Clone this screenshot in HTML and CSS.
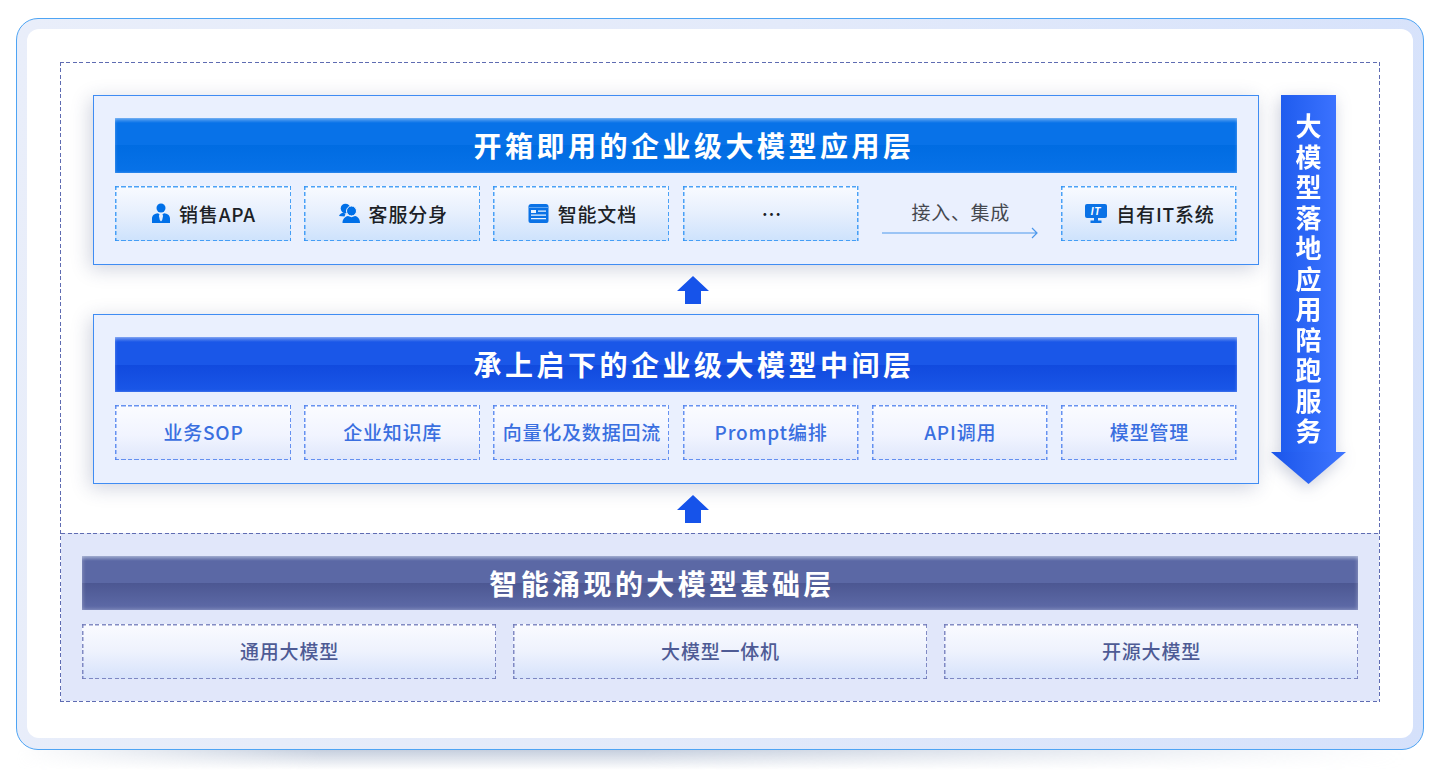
FILE: index.html
```html
<!DOCTYPE html>
<html lang="zh-CN">
<head>
<meta charset="utf-8">
<title>企业级大模型架构</title>
<link rel="stylesheet" href="styles.css">
</head>
<body>
<div class="page">
  <div class="shell">
    <div class="inner">
      <div class="frame">
        <div class="upper">
          <div class="layers">
            <section class="panel">
              <h2 class="title title-app">开箱即用的企业级大模型应用层</h2>
              <div class="grid6">
                <div class="item item-app">
                  <svg class="ico" width="18" height="20" viewBox="0 0 18 20"><circle cx="9" cy="5" r="4.5" fill="#0070e8"/><path d="M0 20v-4.500C0 12.500 2.500 10.600 6 10.300l1.600 1.200-.7 1.200.9 4.300L9 18.500l1.200-1.500.9-4.300-.7-1.200 1.600-1.200c3.500.3 6 2.200 6 5.200V20z" fill="#0070e8"/></svg>
                  <span>销售APA</span>
                </div>
                <div class="item item-app">
                  <svg class="ico" width="21" height="20" viewBox="0 0 21 20"><circle cx="6.500" cy="5.500" r="4.800" fill="#0070e8"/><path d="M0 13c.6-2 2.400-3 4.500-3.200l2 1-1 2.700z" fill="#0070e8"/><circle cx="12.500" cy="8" r="5" fill="#0070e8" stroke="#f0f5fe" stroke-width="1"/><path d="M3.500 20c0-4 2.500-6.500 5.500-7l3.500 1.200 3.500-1.200c3 .5 5 3 5 7z" fill="#0070e8"/></svg>
                  <span>客服分身</span>
                </div>
                <div class="item item-app">
                  <svg class="ico" width="21" height="19" viewBox="0 0 21 19"><path d="M3 0h15c1.500 0 2.500 1 2.500 2.500V17a2 2 0 0 1-2 2h-16a2 2 0 0 1-2-2V2.500C.5 1 1.500 0 3 0z" fill="#0a72e6"/><path d="M.5 3.500h20" stroke="#5ea4f0" stroke-width="1"/><path d="M3 6h5v3H3zM10 6.500h8v1.300h-8zM3 10.500h15v1.300H3zM3 14h15v1.300H3z" fill="#eaf3fe"/></svg>
                  <span>智能文档</span>
                </div>
                <div class="item item-app dots">…</div>
                <div class="link">
                  <span class="link-text">接入、集成</span>
                  <svg class="link-arrow" width="157" height="12" viewBox="0 0 157 12"><path d="M0 6h155M150 1l5 5-5 5" fill="none" stroke="#4c98ec" stroke-width="1.200"/></svg>
                </div>
                <div class="item item-app">
                  <svg class="ico" width="22" height="19" viewBox="0 0 22 19"><rect x="0" y="0" width="22" height="14" rx="2" fill="#0a72e6"/><text x="11" y="11" class="ico-text" text-anchor="middle">IT</text><path d="M9 14h4v2.500H9zM5.500 16.500h11V19h-11z" fill="#0a72e6"/></svg>
                  <span>自有IT系统</span>
                </div>
              </div>
            </section>
            <div class="connector">
              <svg width="32" height="28" viewBox="0 0 32 28"><path d="M16 0l16 15h-8v13H8V15H0z" fill="#1653ea"/></svg>
            </div>
            <section class="panel">
              <h2 class="title title-mid">承上启下的企业级大模型中间层</h2>
              <div class="grid6">
                <div class="item item-mid">业务SOP</div>
                <div class="item item-mid">企业知识库</div>
                <div class="item item-mid">向量化及数据回流</div>
                <div class="item item-mid">Prompt编排</div>
                <div class="item item-mid">API调用</div>
                <div class="item item-mid">模型管理</div>
              </div>
            </section>
            <div class="connector">
              <svg width="32" height="28" viewBox="0 0 32 28"><path d="M16 0l16 15h-8v13H8V15H0z" fill="#1653ea"/></svg>
            </div>
          </div>
          <aside class="service">
            <div class="service-body">大模型落地应用陪跑服务</div>
            <div class="service-head"></div>
          </aside>
        </div>
        <section class="base">
          <h2 class="title title-base">智能涌现的大模型基础层</h2>
          <div class="grid3">
            <div class="item item-base">通用大模型</div>
            <div class="item item-base">大模型一体机</div>
            <div class="item item-base">开源大模型</div>
          </div>
        </section>
      </div>
    </div>
  </div>
  <div class="ground"></div>
</div>
</body>
</html>
```

FILE: styles.css
```css
* { box-sizing: border-box; margin: 0; padding: 0; }
html, body { background: #fff; overflow: hidden; }
body { font-family: "Noto Sans CJK SC", "Noto Sans", sans-serif; }

.page { width: 1452px; height: 770px; padding: 18px 0 0 16px; }

.shell {
  width: 1408px;
  height: 732px;
  padding: 10px 10px 11px;
  border: 1px solid #4ea4f4;
  border-radius: 22px;
  background: linear-gradient(100deg, #e9eefa 0%, #e3eafa 50%, #d5e1fb 100%);
}
.inner {
  height: 100%;
  padding: 33px 33px 35px;
  border-radius: 12px;
  background: #fff;
}
.frame {
  position: relative;
  height: 640px;
  padding: 1px;
  display: flex;
  flex-direction: column;
}
.frame::after,
.base::before,
.item::after {
  content: "";
  position: absolute;
  inset: 0;
  pointer-events: none;
  background:
    repeating-linear-gradient(90deg, var(--dash) 0 var(--on), transparent var(--on) var(--period)) top left / 100% var(--w) no-repeat,
    repeating-linear-gradient(90deg, var(--dash) 0 var(--on), transparent var(--on) var(--period)) bottom left / 100% var(--w) no-repeat,
    repeating-linear-gradient(180deg, var(--dash) 0 var(--on), transparent var(--on) var(--period)) top left / var(--w) 100% no-repeat,
    repeating-linear-gradient(180deg, var(--dash) 0 var(--on), transparent var(--on) var(--period)) top right / var(--w) 100% no-repeat;
}
.frame { --dash: #5f6cb2; --on: 4px; --period: 6.500px; --w: 1px; }
.frame::after { z-index: 2; }
.upper {
  flex: none;
  height: 470px;
  padding: 32px 0 0 32px;
  display: flex;
  gap: 12px;
}
.layers { width: 1166px; }

.panel {
  height: 170px;
  padding: 22px 21px 0;
  border: 1px solid #3f8cf3;
  background: #eaf0fe;
  box-shadow: -3px 4px 18px rgba(40, 55, 110, .22);
}
.connector {
  height: 49px;
  padding-left: 34px;
  display: flex;
  align-items: center;
  justify-content: center;
}

.title {
  height: 55px;
  font-size: 28px;
  font-weight: 700;
  line-height: 55px;
  letter-spacing: 3.500px;
  text-align: center;
  color: #fff;
}
.title-app {
  padding-left: 36px;
  background: linear-gradient(#5ea4f2 0, #0872e8 5px, #0872e8 50%, #006ce2 50%, #0872e8 100%);
  box-shadow: inset 0 0 3px rgba(255, 255, 255, .35);
}
.title-mid {
  padding-left: 36px;
  background: linear-gradient(#6f97f0 0, #1a57e8 5px, #1a57e8 50%, #114ade 50%, #1a57e8 100%);
  box-shadow: inset 0 0 3px rgba(255, 255, 255, .35);
}
.title-base {
  height: 54px;
  line-height: 54px;
  padding-right: 116px;
  letter-spacing: 3.400px;
  background: linear-gradient(#8c9ac4 0, #5b68a5 5px, #5b68a5 50%, #4c5792 50%, #5e6ba8 100%);
  box-shadow: inset 0 0 4px rgba(255, 255, 255, .4);
}

.grid6 {
  margin-top: 13px;
  display: grid;
  grid-template-columns: repeat(6, 176px);
  column-gap: 13.200px;
}
.grid3 {
  margin-top: 14px;
  display: grid;
  grid-template-columns: repeat(3, 414px);
  column-gap: 17px;
}
.item {
  position: relative;
  height: 55px;
  display: flex;
  align-items: center;
  justify-content: center;
  gap: 9px;
  font-size: 19px;
  font-weight: 500;
  letter-spacing: .8px;
  white-space: nowrap;
  --on: 4px;
  --period: 6.500px;
  --w: 1.500px;
}
.item-app {
  --dash: rgba(45, 146, 245, .85);
  padding: 0 0 1px 2px;
  background: linear-gradient(#f9fbff 0%, #e6effd 50%, #cde2fc 100%);
  color: #1c1f26;
}
.item-mid {
  --dash: rgba(77, 128, 238, .85);
  padding: 0 0 3px 1px;
  background: linear-gradient(#fbfcff 0%, #f1f4ff 55%, #dfe7fb 100%);
  color: #3a6fe0;
}
.item-base {
  --dash: rgba(110, 120, 185, .85);
  padding: 0 0 2px 1px;
  background: linear-gradient(#fafbff 0%, #eef2fd 50%, #d6e2fb 100%);
  color: #4e5b95;
}
.dots { font-size: 20px; letter-spacing: 0; }
.ico { flex: none; }
.ico-text { font: italic 700 10px "Liberation Sans", sans-serif; fill: #fff; }

.link {
  height: 55px;
  padding: 0 0 2px 10px;
  display: flex;
  flex-direction: column;
  align-items: center;
  justify-content: flex-end;
}
.link-text {
  font-size: 19px;
  line-height: 26px;
  letter-spacing: .7px;
  color: #45484f;
  transform: translate(-4px, 1px);
}
.link-arrow { margin-top: 3px; align-self: flex-start; }

.service {
  width: 75px;
  display: flex;
  flex-direction: column;
  align-items: center;
  filter: drop-shadow(-2px 4px 8px rgba(40, 55, 110, .25));
}
.service-body {
  width: 55px;
  height: 357px;
  padding: 15px 14px 0;
  font-size: 26px;
  font-weight: 700;
  line-height: 30.500px;
  text-align: center;
  color: #fff;
  background: linear-gradient(90deg, #1f5cee, #3b72ff);
}
.service-head {
  width: 75px;
  height: 32px;
  background: linear-gradient(90deg, #1a55ea, #3f76ff);
  clip-path: polygon(0 0, 100% 0, 50% 100%);
}

.base {
  position: relative;
  flex: 1;
  padding: 23px 21px 0 21px;
  background: #e1e7fa;
}
.base::before {
  bottom: auto;
  height: 1px;
  background: repeating-linear-gradient(90deg, #5f6cb2 0 4px, transparent 4px 6.500px);
}

.ground {
  width: 1390px;
  height: 20px;
  background: linear-gradient(#c6cfde, rgba(255, 255, 255, 0));
  -webkit-mask-image: linear-gradient(90deg, transparent 0, #000 22%, #000 45%, rgba(0, 0, 0, .35) 80%, transparent 100%);
  mask-image: linear-gradient(90deg, transparent 0, #000 22%, #000 45%, rgba(0, 0, 0, .35) 80%, transparent 100%);
}
```
